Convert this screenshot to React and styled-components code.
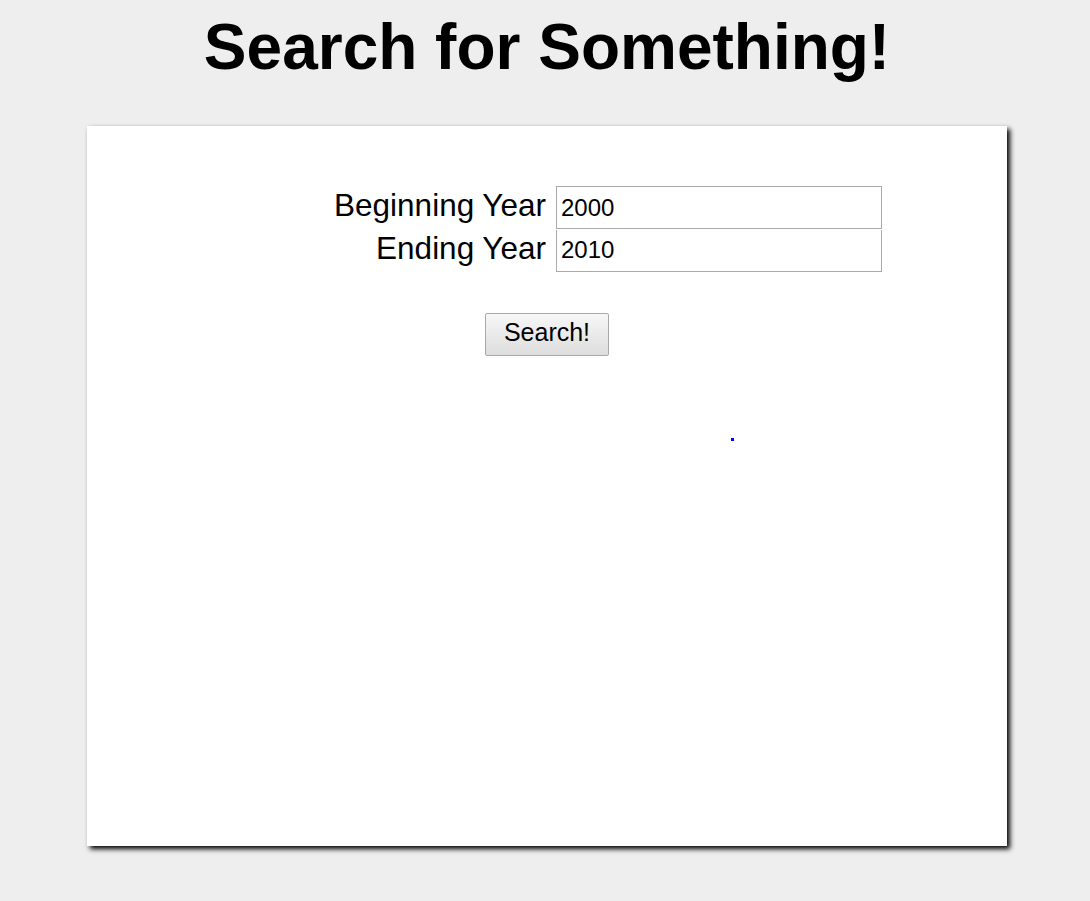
import React, { useState } from "react";
import styled, { createGlobalStyle } from "styled-components";

const GlobalStyle = createGlobalStyle`
  html, body {
    margin: 0;
    padding: 0;
    background-color: #eeeeee;
    font-family: "Liberation Sans", Arial, sans-serif;
  }
`;

const Page = styled.div`
  width: 920px;
  margin-left: 87px;
  padding-bottom: 55px;
`;

const Title = styled.h1`
  margin: 10px 0 42px;
  font-size: 64px;
  line-height: 74px;
  font-weight: 700;
  text-align: center;
  color: #000;
`;

const Card = styled.div`
  background-color: #fff;
  height: 720px;
  box-shadow: 3px 3px 5px #000;
  padding-top: 60px;
  box-sizing: border-box;
`;

const Form = styled.form`
  display: grid;
  grid-template-columns: 459px 326px;
  column-gap: 10px;
  align-items: center;
`;

const Label = styled.label`
  font-size: 31.5px;
  text-align: right;
  color: #000;
  line-height: 39px;
  padding-bottom: 4px;
`;

const Input = styled.input`
  box-sizing: border-box;
  width: 326px;
  height: ${(p) => (p.$first ? "43px" : "42px")};
  margin: 0;
  padding: 0 4px;
  border: 1px solid #aaa;
  border-top: ${(p) => (p.$first ? "1px solid #aaa" : "none")};
  font-family: "Liberation Sans", Arial, sans-serif;
  font-size: 24px;
  color: #000;
  outline: none;
`;

const ButtonRow = styled.div`
  display: flex;
  justify-content: center;
  padding-top: 41px;
`;

const Button = styled.button`
  width: 124px;
  height: 43px;
  border: 1px solid #a9a9a9;
  border-radius: 2px;
  background: linear-gradient(#f7f7f7, #dddddd);
  font-family: "Liberation Sans", Arial, sans-serif;
  font-size: 25px;
  color: #000;
  padding: 0 0 4px;
  cursor: pointer;
`;

const Results = styled.div`
  position: relative;
  height: 80px;
`;

const Dot = styled.span`
  position: absolute;
  left: 644px;
  top: 82px;
  width: 3px;
  height: 3px;
  background-color: #0000ff;
`;

const App = () => {
  const [start, setStart] = useState("2000");
  const [end, setEnd] = useState("2010");

  return (
    <Page>
      <GlobalStyle />
      <Title>Search for Something!</Title>
      <Card>
        <Form onSubmit={(e) => e.preventDefault()}>
          <Label>Beginning Year</Label>
          <Input $first value={start} onChange={(e) => setStart(e.target.value)} />
          <Label>Ending Year</Label>
          <Input value={end} onChange={(e) => setEnd(e.target.value)} />
        </Form>
        <ButtonRow>
          <Button type="button">Search!</Button>
        </ButtonRow>
        <Results>
          <Dot />
        </Results>
      </Card>
    </Page>
  );
};

export default App;
